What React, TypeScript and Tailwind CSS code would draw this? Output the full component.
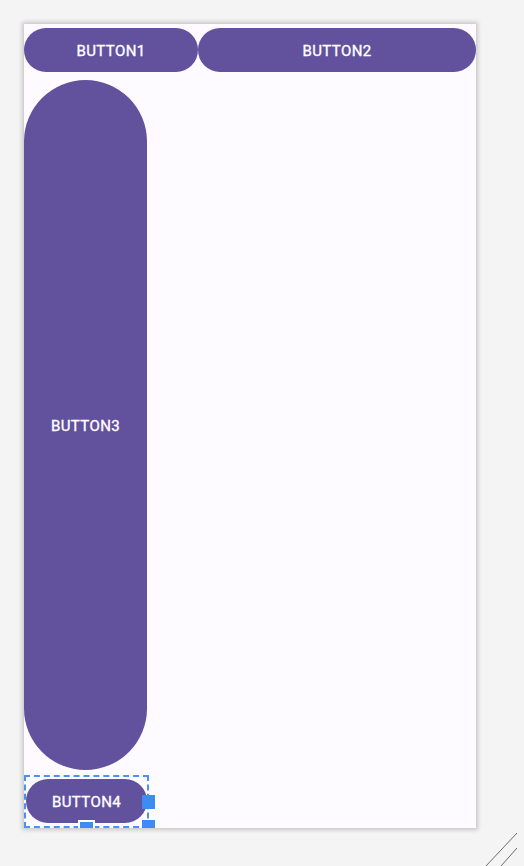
const btn =
  "flex items-center justify-center rounded-full bg-[#62519d] text-white text-[15px] font-normal tracking-[0.4px] pt-[2px] [-webkit-text-stroke:0.35px_white] font-['Roboto',sans-serif]";

export default function App() {
  return (
    <div className="relative w-[524px] h-[866px] bg-[#f4f4f4] pt-[24px] pl-[24px] overflow-hidden">
      <div className="relative w-[452px] h-[804px] bg-[#fdfbff] overflow-hidden shadow-[0_0_4px_2px_rgba(0,0,0,0.18)] flex flex-col pt-[4px]">
        <div className="flex h-[44px]">
          <div className={`${btn} w-[174px]`}>BUTTON1</div>
          <div className={`${btn} flex-1`}>BUTTON2</div>
        </div>
        <div className={`${btn} mt-[8px] w-[123px] h-[690px]`}>BUTTON3</div>
        <div className="relative mt-[5px] w-[125px] h-[53px] border-2 border-dashed border-[#4a90f5] pt-[2px]">
          <div className={`${btn} w-[121px] h-[44px]`}>BUTTON4</div>
          <div className="absolute left-[116px] top-[18px] w-[13px] h-[14px] bg-[#3f8bf5]" />
          <div className="absolute left-[52px] top-[43px] w-[17px] h-[12px] bg-[#3f8bf5] border-2 border-white" />
          <div className="absolute left-[116px] top-[43px] w-[13px] h-[12px] bg-[#3f8bf5]" />
        </div>
      </div>
      <svg className="absolute right-0 bottom-0" width="40" height="34" viewBox="0 0 40 34">
        <line x1="33" y1="1" x2="2" y2="34" stroke="#6b6b6b" strokeWidth="1" />
        <line x1="33" y1="16" x2="17" y2="34" stroke="#6b6b6b" strokeWidth="1" />
      </svg>
    </div>
  );
}
